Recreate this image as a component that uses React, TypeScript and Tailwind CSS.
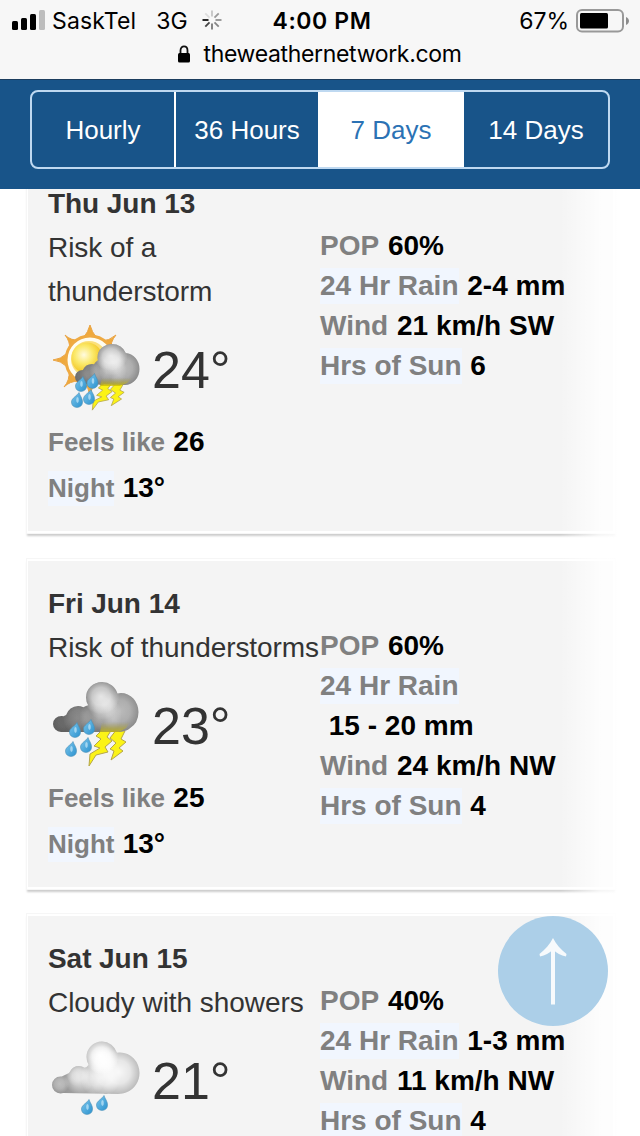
import { Fragment } from "react";
import type { ReactNode } from "react";

type Stat = { label: string; value: string; marked?: boolean; wrap?: boolean };

type Day = {
  date: string;
  summary: string;
  temp: string;
  feelsLike: string;
  night: string;
  icon: ReactNode;
  stats: Stat[];
};

// center x, center y, radius x, radius y, highlight strength
type Lobe = [number, number, number, number, number];

const tabs = ["Hourly", "36 Hours", "7 Days", "14 Days"];

function Drop({ x, y }: { x: number; y: number }) {
  return (
    <g transform={`translate(${x} ${y})`}>
      <path d="M2-7.500C3-4 5.500-2 5.500 2C5.500 5.500 3 7.400 0 7.400C-3 7.400-5.500 5.500-5.500 2C-5.500-2 0-4 2-7.500Z" fill="url(#drop)" stroke="#4a8fb5" strokeWidth="0.600" />
      <ellipse cx="0.500" cy="0" rx="1.300" ry="3" fill="#d9f2fd" opacity="0.600" />
    </g>
  );
}

function Bolts() {
  return (
    <g fill="#fbf316" stroke="#b5a64a" strokeWidth="1" strokeLinejoin="round">
      <path d="M51 51L60 51L55 59L60 63L53 69L56 74L44 77L37 88L38 76L48 70L42 68L49 61L44 58Z" />
      <path d="M65 51L73 53L69 61L74 64L67 70L71 73L59 82L62 73L58 71L64 65L58 60Z" />
    </g>
  );
}

function Gradients() {
  return (
    <svg className="absolute size-0" aria-hidden="true">
      <defs>
        <radialGradient id="ball" cx="0.4" cy="0.4" r="0.65">
          <stop offset="0" stopColor="#fffbe0" />
          <stop offset="0.45" stopColor="#fbe96a" />
          <stop offset="1" stopColor="#f0bd10" />
        </radialGradient>
        <linearGradient id="drop" x1="0" y1="0" x2="1" y2="1">
          <stop offset="0" stopColor="#7cc6ec" />
          <stop offset="1" stopColor="#2b92cf" />
        </linearGradient>
        <linearGradient id="storm" x1="0" y1="0.6" x2="1" y2="0.4">
          <stop offset="0" stopColor="#5a5a5a" />
          <stop offset="0.5" stopColor="#7c7c7c" />
          <stop offset="1" stopColor="#8a8a8a" />
        </linearGradient>
        <linearGradient id="pale" x1="0" y1="0.6" x2="1" y2="0.4">
          <stop offset="0" stopColor="#8f8f8f" />
          <stop offset="0.4" stopColor="#b4b4b4" />
          <stop offset="1" stopColor="#b4b4b4" />
        </linearGradient>
        <radialGradient id="shine">
          <stop offset="0" stopColor="#ffffff" />
          <stop offset="0.5" stopColor="#ffffff" stopOpacity="0.75" />
          <stop offset="1" stopColor="#ffffff" stopOpacity="0" />
        </radialGradient>
        <linearGradient id="glow" x1="0" y1="0" x2="0" y2="1">
          <stop offset="0" stopColor="#b7a93a" stopOpacity="0" />
          <stop offset="1" stopColor="#d0c000" />
        </linearGradient>
        <filter id="soft" x="-10%" y="-10%" width="120%" height="120%">
          <feGaussianBlur stdDeviation="0.6" />
        </filter>
      </defs>
    </svg>
  );
}

function Cloud({ id, base, fill, lobes }: { id: string; base: string; fill: string; lobes: Lobe[] }) {
  return (
    <g filter="url(#soft)">
      <clipPath id={id}>
        <path d={base} />
        {lobes.map(([x, y, rx, ry], i) => (
          <ellipse key={i} cx={x} cy={y} rx={rx} ry={ry} />
        ))}
      </clipPath>
      <g clipPath={`url(#${id})`}>
        <rect width="90" height="66" fill={fill} />
        {lobes.map(([x, y, rx, ry, strength], i) => (
          <ellipse key={i} cx={x - 1} cy={y - 1} rx={rx * 1.15} ry={ry * 1.15} fill="url(#shine)" opacity={strength} />
        ))}
      </g>
    </g>
  );
}

function SunStormIcon() {
  return (
    <svg viewBox="0 0 88 88" className="size-[88px] shrink-0">
      <g filter="url(#soft)">
        <path
          d="M38 2Q40 9 44 14L32 14Q36 9 38 2ZM64 12Q58 19 59 27L49 18Q57 18 64 12ZM13 12Q19 18 28 17L18 27Q18 18 13 12ZM1 37Q9 36 14 31L14 43Q9 38 1 37ZM12 64Q18 57 17 48L27 58Q18 58 12 64ZM38 73Q37 65 32 60L44 60Q39 65 38 73Z"
          fill="#efa93a"
          stroke="#e9a344"
          strokeLinejoin="round"
        />
        <circle cx="38" cy="37" r="24" fill="#fffdf0" stroke="#efaa42" strokeWidth="3" />
        <circle cx="37" cy="36" r="18" fill="#fbe07a" />
        <circle cx="35" cy="35" r="15.500" fill="url(#ball)" />
      </g>
      <g transform="translate(8.500 22) scale(0.86 0.74)">
        <Bolts />
      </g>
      <Cloud
        id="sunStormCloud"
        base="M32 61L30 50L51 38L76 34L85 42C90 54 82 62 70 62Z"
        fill="url(#storm)"
        lobes={[
          [31, 54, 8, 7, 0.08],
          [40, 51, 10, 10, 0.18],
          [50, 49, 10, 13, 0.3],
          [62, 48, 12, 14, 0.4],
          [73, 46, 14.5, 16, 0.45],
          [61, 40, 12, 12, 0.4],
          [60, 34, 14.5, 13, 0.75],
        ]}
      />
      <path d="M50 55H80L75 60L68 63H48Z" fill="url(#glow)" opacity="0.85" filter="url(#soft)" />
      <Drop x={29} y={61} />
      <Drop x={40.5} y={58} />
      <Drop x={25} y={77} />
      <Drop x={37} y={74} />
    </svg>
  );
}

function StormIcon() {
  return (
    <svg viewBox="0 0 88 88" className="size-[88px] shrink-0">
      <Bolts />
      <Cloud
        id="stormCloud"
        base="M9 54L12 38L34 28L62 20L80 28L82 46C76 54 70 54 64 54Z"
        fill="url(#storm)"
        lobes={[
          [9.5, 46, 8.5, 8, 0.06],
          [26, 41, 12.5, 13, 0.2],
          [41, 40, 11, 14, 0.25],
          [56, 38, 13, 16, 0.35],
          [69, 34, 17.5, 19, 0.45],
          [52, 28, 13, 13, 0.35],
          [50, 19.5, 16, 15.5, 0.75],
        ]}
      />
      <path d="M50 44H78L74 50L67 54H48Z" fill="url(#glow)" opacity="0.7" filter="url(#soft)" />
      <Drop x={23} y={52} />
      <Drop x={37} y={49} />
      <Drop x={19} y={71} />
      <Drop x={34} y={67} />
    </svg>
  );
}

function ShowersIcon() {
  return (
    <svg viewBox="0 0 88 88" className="size-[88px] shrink-0">
      <Cloud
        id="showersCloud"
        base="M9 59L9 43L19 38L38 32L62 22L80 32L86 46C82 56 74 60 66 60Z"
        fill="url(#pale)"
        lobes={[
          [8.5, 51, 8.5, 8.5, 0.4],
          [28, 46, 13, 13, 0.5],
          [27, 42, 10, 10, 0.5],
          [42, 44, 11, 15, 0.6],
          [54, 42, 14, 18, 0.8],
          [68, 39, 19.5, 20.5, 0.9],
          [50, 23, 15.5, 15.5, 1],
          [52, 27, 13, 13, 0.9],
        ]}
      />
      <Drop x={35} y={73} />
      <Drop x={50} y={69} />
    </svg>
  );
}

const days: Day[] = [
  {
    date: "Thu Jun 13",
    summary: "Risk of a thunderstorm",
    temp: "24°",
    feelsLike: "26",
    night: "13°",
    icon: <SunStormIcon />,
    stats: [
      { label: "POP", value: "60%" },
      { label: "24 Hr Rain", value: "2-4 mm", marked: true },
      { label: "Wind", value: "21 km/h SW" },
      { label: "Hrs of Sun", value: "6", marked: true },
    ],
  },
  {
    date: "Fri Jun 14",
    summary: "Risk of thunderstorms",
    temp: "23°",
    feelsLike: "25",
    night: "13°",
    icon: <StormIcon />,
    stats: [
      { label: "POP", value: "60%" },
      { label: "24 Hr Rain", value: "15 - 20 mm", marked: true, wrap: true },
      { label: "Wind", value: "24 km/h NW" },
      { label: "Hrs of Sun", value: "4", marked: true },
    ],
  },
  {
    date: "Sat Jun 15",
    summary: "Cloudy with showers",
    temp: "21°",
    feelsLike: "",
    night: "",
    icon: <ShowersIcon />,
    stats: [
      { label: "POP", value: "40%" },
      { label: "24 Hr Rain", value: "1-3 mm", marked: true },
      { label: "Wind", value: "11 km/h NW" },
      { label: "Hrs of Sun", value: "4", marked: true },
    ],
  },
];

function Label({ children, marked }: { children: ReactNode; marked?: boolean }) {
  return <span className={marked ? "mr-px bg-[#f1f6fe] pt-0.5 pb-[3px] text-[#808080]" : "mr-px text-[#808080]"}>{children}</span>;
}

function Spinner() {
  const shades = ["#c4c4c4", "#9a9a9a", "#909090", "#858585", "#777777", "#444444", "#111111", "#dddddd"];
  return (
    <svg viewBox="0 0 20 20" className="mb-0.5 ml-[14px] size-5">
      {shades.map((shade, i) => (
        <path key={i} d="M10 0.500V6.500" stroke={shade} strokeWidth="1.800" transform={`rotate(${i * 45} 10 10)`} />
      ))}
    </svg>
  );
}

function StatusBar() {
  return (
    <header className="h-[79px] shrink-0 bg-[#f7f7f7] font-[Inter,sans-serif] text-black">
      <div className="grid h-[42px] grid-cols-[1fr_auto_1fr] items-center pr-[10px] pl-3 text-[23px]">
        <div className="flex items-center">
          <svg viewBox="0 0 34 20" className="mr-[6px] mb-0.5 h-5 w-[34px]">
            <rect x="0" y="11" width="6" height="9" rx="1.500" />
            <rect x="9" y="8" width="6" height="12" rx="1.500" />
            <rect x="18" y="4" width="6" height="16" rx="1.500" />
            <rect x="27" y="0" width="6" height="20" rx="1.500" fill="#bdbdbd" />
          </svg>
          <span className="tracking-[0.15px]">SaskTel</span>
          <span className="ml-5">3G</span>
          <Spinner />
        </div>
        <div className="pl-0.5 font-semibold tracking-[0.6px]">4:00 PM</div>
        <div className="flex items-center justify-end">
          <span>67%</span>
          <svg viewBox="0 0 54 24" className="mb-px ml-[7px] h-6 w-[54px]">
            <rect x="1" y="1" width="46" height="21.500" rx="5" fill="none" stroke="#999999" strokeWidth="2" />
            <rect x="4" y="4" width="28" height="15.500" rx="1.500" />
            <path d="M50 8C54 10 54 14 50 16Z" fill="#8c8c8c" />
          </svg>
        </div>
      </div>
      <div className="flex h-6 items-center justify-center text-[23px] tracking-[-0.33px]">
        <svg viewBox="0 0 12 18" className="mr-[13px] h-[18px] w-3">
          <path d="M2.500 9V5.500C2.500 0 9.500 0 9.500 5.500V9" fill="none" stroke="#111111" strokeWidth="1.800" />
          <rect x="0" y="8" width="12" height="9.500" rx="1.500" />
        </svg>
        theweathernetwork.com
      </div>
    </header>
  );
}

function PeriodTabs() {
  return (
    <nav className="h-[110px] shrink-0 border-t border-[#1c3d5e] bg-[#185489] px-[30px] pt-[10px]">
      <div className="grid h-[79px] grid-cols-[144px_142px_146px_1fr] overflow-hidden rounded-lg border-2 border-[#bfd9f1] text-[26px]">
        {tabs.map((tab, i) => (
          <button
            key={tab}
            className={
              tab === "7 Days"
                ? "bg-white pt-0.5 text-[#2b72b4]"
                : i === 0
                  ? "border-r-2 border-white pt-0.5 text-white"
                  : "pt-0.5 text-white"
            }
          >
            {tab}
          </button>
        ))}
      </div>
    </nav>
  );
}

function DayCard({ day }: { day: Day }) {
  return (
    <article className="flex border-2 border-l border-white bg-[#f4f4f4] px-5 pt-[21px] pb-5 text-[28px] shadow-[0_0_0_1px_#f6f6f6,0_3px_2px_0_#cccccc]">
      <div className="-mr-1 w-[276px] shrink-0">
        <h2 className="leading-[44px] font-bold tracking-[-0.06px] text-[#333333]">{day.date}</h2>
        <p className="leading-[44px] tracking-[-0.06px] text-[#333333]">{day.summary}</p>
        <div className="flex h-[105px] items-center gap-3 pl-1">
          {day.icon}
          <span className="pt-[7px] text-[52px] leading-none text-[#333333]">{day.temp}</span>
        </div>
        {day.feelsLike && (
          <p className="h-[46px] text-[26px] leading-[45px] font-bold">
            <Label>Feels like</Label> <span className="text-[28px]">{day.feelsLike}</span>
          </p>
        )}
        {day.night && (
          <p className="h-[46px] text-[26px] leading-[45px] font-bold">
            <Label marked>Night</Label> <span className="text-[28px]">{day.night}</span>
          </p>
        )}
      </div>
      <div className="flex-1 pt-11 leading-10 font-bold whitespace-pre">
        {day.stats.map((stat) => (
          <Fragment key={stat.label}>
            <p>
              <Label marked={stat.marked}>{stat.label}</Label>
              {!stat.wrap && ` ${stat.value}`}
            </p>
            {stat.wrap && <p className="pl-px">{` ${stat.value}`}</p>}
          </Fragment>
        ))}
      </div>
    </article>
  );
}

export default function App() {
  return (
    <div className="relative flex h-[1136px] w-[640px] flex-col overflow-hidden bg-white font-['Liberation_Sans',Arial,sans-serif] text-black">
      <Gradients />
      <StatusBar />
      <PeriodTabs />
      <main className="relative min-h-0 flex-1 overflow-hidden">
        <div className="-mt-[30px] flex flex-col gap-[25.5px] pr-[25px] pl-[27px]">
          {days.map((day) => (
            <DayCard key={day.date} day={day} />
          ))}
        </div>
        <div className="absolute inset-y-0 right-0 w-[80px] bg-linear-to-r from-white/0 via-white/80 via-50% to-white" />
      </main>
      <button className="absolute top-[916px] left-[498px] flex size-[110px] items-center justify-center rounded-full bg-[#accfe8]" aria-label="Back to top">
        <svg viewBox="0 0 30 68" className="h-[68px] w-[30px]">
          <path d="M15 6V67.500" stroke="#f7fafc" strokeWidth="4" />
          <path d="M15 1C18 7.500 23 12.500 28.500 17L28 19.500C23 18.500 18.500 16 15 12.500C11.500 16 7 18.500 2 19.500L1.500 17C7 12.500 12 7.500 15 1Z" fill="#f7fafc" />
        </svg>
      </button>
    </div>
  );
}
